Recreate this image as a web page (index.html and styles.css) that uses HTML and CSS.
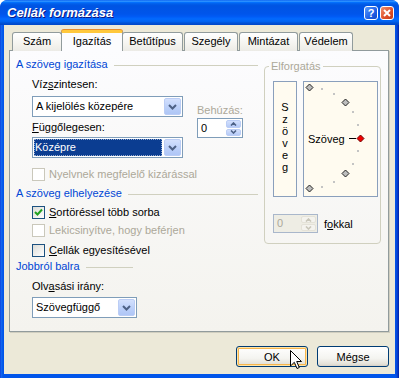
FILE: index.html
```html
<!DOCTYPE html>
<html>
<head>
    <title>Cellák formázása</title>
    <link rel="stylesheet" href="styles.css">
</head>
<body>
    <div class="window">
        <div class="titlebar">
            <span class="title">Cellák formázása</span>
            <div class="caption-buttons">
                <div class="cap-btn help">?</div>
                <div class="cap-btn close">
                    <svg width="8" height="8" viewBox="0 0 8 8"><path d="M1 1 L7 7 M7 1 L1 7" stroke="#fff" stroke-width="2"/></svg>
                </div>
            </div>
        </div>
        <div class="client">
            <div class="tabs">
                <div class="tab">Szám</div>
                <div class="tab active">Igazítás</div>
                <div class="tab">Betűtípus</div>
                <div class="tab">Szegély</div>
                <div class="tab">Mintázat</div>
                <div class="tab">Védelem</div>
            </div>
            <div class="page">
                <div class="left">
                    <div class="group-title">A szöveg igazítása</div>
                    <div class="align-row">
                        <div class="align-col">
                            <div class="label">Víz<u>s</u>zintesen:</div>
                            <div class="combo">
                                <span class="combo-text">A kijelölés közepére</span>
                                <span class="combo-btn"><svg width="9" height="6" viewBox="0 0 9 6"><path d="M1 1 L4.5 4.5 L8 1" stroke="#4D6185" stroke-width="2" fill="none"/></svg></span>
                            </div>
                            <div class="label second"><u>F</u>üggőlegesen:</div>
                            <div class="combo selected">
                                <span class="combo-text"><span class="highlight">Középre</span></span>
                                <span class="combo-btn"><svg width="9" height="6" viewBox="0 0 9 6"><path d="M1 1 L4.5 4.5 L8 1" stroke="#4D6185" stroke-width="2" fill="none"/></svg></span>
                            </div>
                        </div>
                        <div class="indent-col">
                            <div class="label disabled">Behúzás:</div>
                            <div class="spin">
                                <span class="spin-text">0</span>
                                <span class="spin-btns">
                                    <span class="spin-btn"><svg width="7" height="4" viewBox="0 0 7 4"><path d="M1 3.5 L3.5 1 L6 3.5" stroke="#4D6185" stroke-width="1.6" fill="none"/></svg></span>
                                    <span class="spin-btn"><svg width="7" height="4" viewBox="0 0 7 4"><path d="M1 0.5 L3.5 3 L6 0.5" stroke="#4D6185" stroke-width="1.6" fill="none"/></svg></span>
                                </span>
                            </div>
                        </div>
                    </div>
                    <div class="check disabled first"><span class="box"></span>Nyelvnek megfelelő kizárással</div>

                    <div class="group-title place">A szöveg elhelyezése</div>
                    <div class="check wrap"><span class="box"><svg width="11" height="11" viewBox="0 0 11 11"><path d="M2 5 L4.5 7.5 L9 2.5" stroke="#21A121" stroke-width="2" fill="none"/></svg></span><u>S</u>ortöréssel több sorba</div>
                    <div class="check disabled shrink"><span class="box"></span>Lekicsinyítve, hogy beférjen</div>
                    <div class="check merge"><span class="box"></span><u>C</u>ellák egyesítésével</div>

                    <div class="group-title rtl">Jobbról balra</div>
                    <div class="label reading">Olv<u>a</u>sási irány:</div>
                    <div class="combo small">
                        <span class="combo-text">Szövegfüggő</span>
                        <span class="combo-btn"><svg width="9" height="6" viewBox="0 0 9 6"><path d="M1 1 L4.5 4.5 L8 1" stroke="#4D6185" stroke-width="2" fill="none"/></svg></span>
                    </div>
                </div>

                <div class="rotation">
                    <span class="rotation-title">Elforgatás</span>
                    <div class="dial-row">
                        <div class="vertical-text">
                            <span>S</span><span>z</span><span>ö</span><span>v</span><span>e</span><span>g</span>
                        </div>
                        <svg class="dial" width="75" height="116" viewBox="0 0 75 116">
                            <rect x="0.5" y="0.5" width="74" height="115" fill="#FFFBF0" stroke="#8A9FBC"/>
                            <g fill="#C4C4C4">
                                <rect x="18" y="7" width="2" height="2"/>
                                <rect x="30" y="12" width="2" height="2"/>
                                <rect x="49" y="30" width="2" height="2"/>
                                <rect x="54" y="43" width="2" height="2"/>
                                <rect x="54" y="69" width="2" height="2"/>
                                <rect x="49" y="82" width="2" height="2"/>
                                <rect x="30" y="100" width="2" height="2"/>
                                <rect x="18" y="105" width="2" height="2"/>
                            </g>
                            <g fill="#BDBDBD" stroke="#222" stroke-width="1">
                                <polygon points="6.5,3 10,6.5 6.5,10 3,6.5"/>
                                <polygon points="42.5,18 46,21.5 42.5,25 39,21.5"/>
                                <polygon points="42.5,89 46,92.5 42.5,96 39,92.5"/>
                                <polygon points="6.5,104 10,107.5 6.5,111 3,107.5"/>
                            </g>
                            <polygon points="57.5,54 61,57.5 57.5,61 54,57.5" fill="#F00000" stroke="#700000"/>
                            <line x1="46" y1="57.5" x2="53" y2="57.5" stroke="#000"/>
                            <text class="dial-text" x="5" y="61.5">Szöveg</text>
                        </svg>
                    </div>
                    <div class="degree-row">
                        <div class="spin disabled">
                            <span class="spin-text">0</span>
                            <span class="spin-btns">
                                <span class="spin-btn"><svg width="7" height="4" viewBox="0 0 7 4"><path d="M1 3.5 L3.5 1 L6 3.5" stroke="#C9C7BA" stroke-width="1.6" fill="none"/></svg></span>
                                <span class="spin-btn"><svg width="7" height="4" viewBox="0 0 7 4"><path d="M1 0.5 L3.5 3 L6 0.5" stroke="#C9C7BA" stroke-width="1.6" fill="none"/></svg></span>
                            </span>
                        </div>
                        <span class="degree-label">f<u>o</u>kkal</span>
                    </div>
                </div>
            </div>
            <div class="buttons">
                <div class="button default">OK</div>
                <div class="button">Mégse</div>
            </div>
        </div>
        <svg class="cursor" width="13" height="20" viewBox="0 0 13 20">
            <path d="M0.5 0.5 L0.5 16 L4.3 12.3 L7 18.5 L9.3 17.5 L6.7 11.5 L11.5 11.5 Z" fill="#fff" stroke="#000" stroke-width="1"/>
        </svg>
    </div>
</body>
</html>
```

FILE: styles.css
```css
* {
    box-sizing: border-box;
}
body {
    margin: 0;
    width: 399px;
    height: 378px;
    overflow: hidden;
    background: #ffffff;
    font-family: 'Liberation Sans', Arial, sans-serif;
    font-size: 11px;
    color: #000;
}
u {
    text-decoration-thickness: 1px;
    text-underline-offset: 1px;
}
.window {
    position: relative;
    width: 399px;
    height: 378px;
    display: flex;
    flex-direction: column;
    border-radius: 8px 8px 0 0;
    background: linear-gradient(to right, #0831D9 0, #166AEE 1px, #0055EA 3px, #0055EA 395px, #0746D8 397px, #001EA0 399px);
}
.titlebar {
    height: 25px;
    display: flex;
    align-items: center;
    padding: 0 5px 0 7px;
    border-radius: 7px 7px 0 0;
    background: linear-gradient(to bottom, #0058EE 0%, #3593FF 4%, #288EFF 6%, #127DFF 8%, #036FFC 10%, #0262EE 14%, #0057E5 20%, #0054E3 24%, #0055EB 56%, #005BF5 66%, #026AFE 76%, #0062EF 86%, #0052D6 92%, #0046C8 100%);
}
.title {
    flex: 1;
    color: #fff;
    font-weight: bold;
    font-style: italic;
    font-size: 13px;
    text-shadow: 1px 1px #0A1883;
}
.caption-buttons {
    display: flex;
    gap: 2px;
}
.cap-btn {
    width: 14px;
    height: 14px;
    border: 1px solid #fff;
    border-radius: 3px;
    display: flex;
    align-items: center;
    justify-content: center;
    color: #fff;
    font-weight: bold;
    font-size: 11px;
}
.help {
    background: linear-gradient(135deg, #5A9BFF, #1F5FE6 60%, #1549C8);
}
.close {
    background: linear-gradient(135deg, #F0906F, #E0522C 55%, #C23A17);
}
.client {
    flex: 1;
    margin: 0 4px 4px;
    background: #ECE9D8;
    padding: 5px 6px 0 5px;
}
.tabs {
    display: flex;
    align-items: flex-end;
    gap: 1px;
    height: 21px;
    margin-left: 3px;
}
.tab {
    height: 19px;
    border: 1px solid #919B9C;
    border-bottom: none;
    border-radius: 3px 3px 0 0;
    background: linear-gradient(#FFFFFF, #F3F2ED 70%, #ECEBE6);
    text-align: center;
    line-height: 16px;
}
.tab:nth-child(1) { width: 50px; }
.tab:nth-child(3) { width: 61px; }
.tab:nth-child(4) { width: 54px; }
.tab:nth-child(5) { width: 59px; }
.tab:nth-child(6) { width: 54px; }
.tab.active {
    position: relative;
    z-index: 1;
    width: 62px;
    height: 21px;
    margin: 0 -2px;
    border-top: 3px solid #FFC83C;
    box-shadow: 0 -1px #E68B2C;
    background: #FCFCFE;
    line-height: 17px;
}
.page {
    height: 282px;
    margin-top: -1px;
    border: 1px solid #919B9C;
    box-shadow: 1px 1px #D0CEBF;
    background: linear-gradient(#FCFCFE, #F4F3EE);
    padding: 6px 0 0 6px;
    display: flex;
    gap: 6px;
    align-items: flex-start;
}
.left {
    width: 242px;
}
.group-title {
    display: flex;
    align-items: center;
    height: 14px;
    color: #0046D5;
    white-space: nowrap;
}
.group-title::after {
    content: '';
    flex: 1;
    height: 1px;
    margin: 2px 0 0 6px;
    background: #D0D0BF;
}
.group-title.place {
    margin-top: 5px;
}
.group-title.rtl {
    width: 117px;
    margin-top: 2px;
}
.label {
    height: 14px;
    line-height: 14px;
    white-space: nowrap;
}
.disabled {
    color: #ACA899;
}
.align-row {
    display: flex;
    margin-top: 6px;
    padding-left: 16px;
}
.align-col {
    width: 151px;
}
.align-col .combo {
    margin-top: 5px;
}
.align-col .label.second {
    margin-top: 3px;
}
.align-col .combo.selected {
    margin-top: 3px;
}
.indent-col {
    margin-left: 14px;
    padding-top: 26px;
}
.indent-col .spin {
    margin-top: 1px;
}
.combo {
    display: flex;
    height: 21px;
    border: 1px solid #7F9DB9;
    background: #fff;
}
.combo-text {
    flex: 1;
    padding-left: 3px;
    line-height: 19px;
    white-space: nowrap;
}
.combo-btn {
    width: 17px;
    margin: 1px;
    border: 1px solid #BBCDF5;
    border-radius: 2px;
    background: linear-gradient(#D3E0FD, #BACFF9 60%, #AFC6F6);
    display: flex;
    align-items: center;
    justify-content: center;
}
.combo.selected .combo-text {
    padding: 1px;
    display: flex;
}
.highlight {
    flex: 1;
    background: #0B3D91;
    color: #fff;
    line-height: 17px;
    padding-left: 1px;
    outline: 1px dotted #8FA8D0;
    outline-offset: -1px;
}
.combo.small {
    width: 105px;
    margin-left: 16px;
    margin-top: 4px;
}
.label.reading {
    margin-top: 6px;
    padding-left: 16px;
}
.spin {
    display: flex;
    width: 46px;
    height: 20px;
    border: 1px solid #7F9DB9;
    background: #fff;
}
.spin-text {
    flex: 1;
    padding-left: 3px;
    line-height: 18px;
}
.spin-btns {
    width: 15px;
    margin: 1px;
    display: flex;
    flex-direction: column;
    gap: 1px;
}
.spin-btn {
    flex: 1;
    border: 1px solid #BBCDF5;
    border-radius: 2px;
    background: linear-gradient(#D3E0FD, #B5CAF7);
    display: flex;
    align-items: center;
    justify-content: center;
}
.spin.disabled {
    width: 45px;
    height: 19px;
    border-color: #A9B7CB;
    background: #EEEDE4;
}
.spin.disabled .spin-text {
    line-height: 17px;
}
.spin.disabled .spin-btn {
    border-color: #E4E2D8;
    background: #F4F3EE;
}
.check {
    display: flex;
    align-items: center;
    height: 14px;
    padding-left: 16px;
    white-space: nowrap;
}
.check.first {
    margin-top: 9px;
}
.check.wrap {
    margin-top: 5px;
}
.check.shrink {
    margin-top: 4px;
}
.check.merge {
    margin-top: 6px;
}
.box {
    width: 13px;
    height: 13px;
    margin-right: 4px;
    border: 1px solid #1C5180;
    background: linear-gradient(135deg, #DCDCD7, #FFFFFF);
    display: flex;
    align-items: center;
    justify-content: center;
}
.check.disabled .box {
    border-color: #CAC8BB;
    background: #fff;
}
.rotation {
    position: relative;
    width: 117px;
    height: 178px;
    margin-top: 9px;
    border: 1px solid #D0D0BF;
    border-radius: 4px;
    padding: 14px 0 0 8px;
}
.rotation-title {
    position: absolute;
    top: -8px;
    left: 4px;
    padding: 0 2px;
    line-height: 14px;
    color: #ACA899;
    background: #FBFBFC;
}
.dial-row {
    display: flex;
    gap: 6px;
    height: 116px;
}
.vertical-text {
    width: 24px;
    border: 1px solid #8A9FBC;
    background: #FFFBF0;
    display: flex;
    flex-direction: column;
    align-items: center;
    padding-top: 19px;
    line-height: 12px;
}
.dial-text {
    font-family: 'Liberation Sans', Arial, sans-serif;
    font-size: 11px;
    fill: #000;
}
.degree-row {
    display: flex;
    align-items: center;
    margin-top: 17px;
}
.degree-label {
    margin-left: 6px;
}
.buttons {
    display: flex;
    justify-content: flex-end;
    gap: 9px;
    margin-top: 14px;
}
.button {
    width: 72px;
    height: 21px;
    border: 1px solid #003C74;
    border-radius: 3px;
    background: linear-gradient(#FFFFFF, #F4F4F0 60%, #E3E1D8 90%, #D6D0C5);
    display: flex;
    align-items: center;
    justify-content: center;
}
.button.default {
    box-shadow: inset 0 0 0 1px #FFE4A8, inset 0 0 0 2px #F6B64E;
}
.cursor {
    position: absolute;
    left: 290px;
    top: 350px;
}
```
